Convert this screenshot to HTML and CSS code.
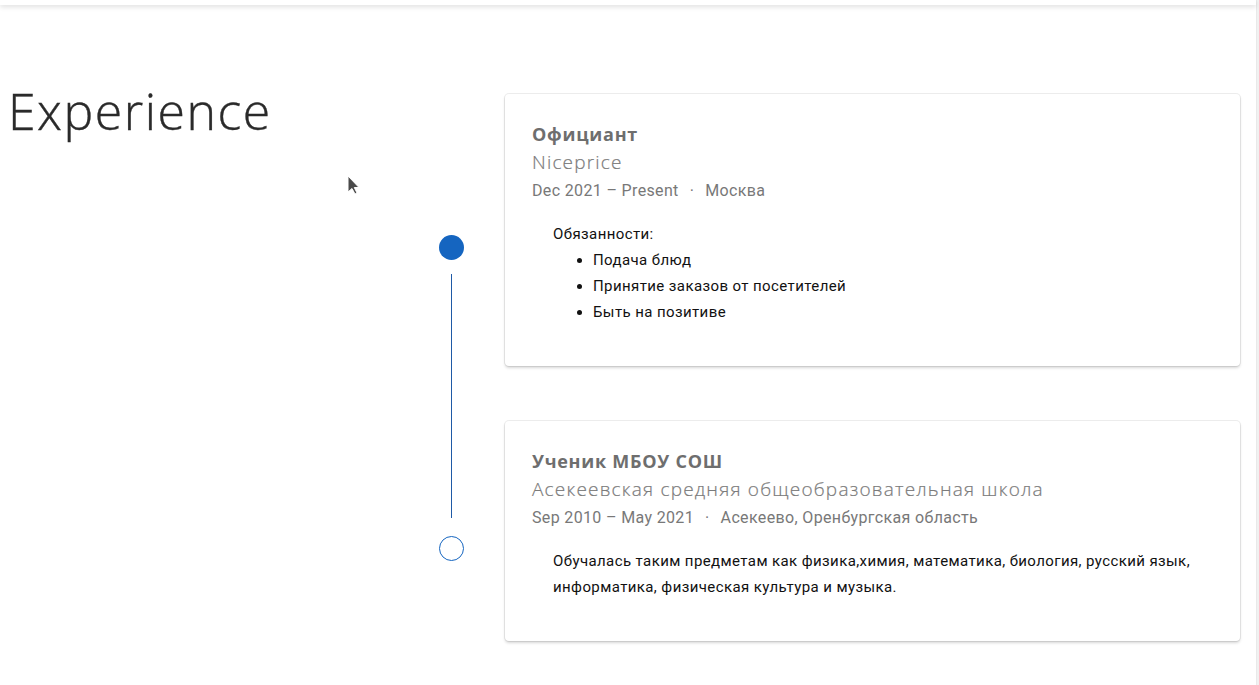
FILE: index.html
```html
<!DOCTYPE html>
<html lang="ru">
<head>
<meta charset="utf-8">
<title>Experience</title>
<link rel="stylesheet" href="styles.css">
</head>
<body>
<div class="page">
  <header class="topbar"></header>
  <section class="experience">
    <h2 class="section-title">Experience</h2>
    <div class="timeline">
      <span class="dot dot-filled"></span>
      <span class="line"></span>
      <span class="dot dot-hollow"></span>
    </div>
    <div class="cards">
      <article class="card">
        <h3 class="job-title">Официант</h3>
        <div class="company">Niceprice</div>
        <div class="meta"><span>Dec 2021 – Present</span><span class="sep">·</span><span>Москва</span></div>
        <div class="body">
          <div>Обязанности:</div>
          <ul class="duties">
            <li>Подача блюд</li>
            <li>Принятие заказов от посетителей</li>
            <li>Быть на позитиве</li>
          </ul>
        </div>
      </article>
      <article class="card">
        <h3 class="job-title">Ученик МБОУ СОШ</h3>
        <div class="company">Асекеевская средняя общеобразовательная школа</div>
        <div class="meta"><span>Sep 2010 – May 2021</span><span class="sep">·</span><span>Асекеево, Оренбургская область</span></div>
        <div class="body">
          <p class="text">Обучалась таким предметам как физика,химия, математика, биология, русский язык, информатика, физическая культура и музыка.</p>
        </div>
      </article>
    </div>
    <svg class="cursor" width="14" height="22" viewBox="0 0 14 22" aria-hidden="true">
      <path d="M1 1 L1 17 L5 13.5 L8 19 L10 18 L7.3 12.5 L12 12.5 Z" fill="#4a4a4a" stroke="#ffffff" stroke-width="1"/>
    </svg>
  </section>
</div>
<div class="scroll-strip"></div>
</body>
</html>
```

FILE: styles.css
```css
* { box-sizing: border-box; }

html, body { height: 100%; }

body {
  margin: 0;
  display: flex;
  background: #ffffff;
  font-family: Roboto, "Liberation Sans", sans-serif;
  overflow: hidden;
}

.page {
  flex: 1;
  min-width: 0;
  background: #ffffff;
}

.scroll-strip {
  width: 3px;
  background: #f1f1f1;
  border-left: 1px solid #e9e9e9;
}

.topbar {
  height: 5px;
  background: #ffffff;
  box-shadow: 0 2px 5px rgba(0, 0, 0, 0.13);
  position: relative;
  z-index: 1;
}

.experience {
  position: relative;
  display: grid;
  grid-template-columns: 390px 25px 1fr;
  column-gap: 41px;
  align-items: start;
  padding: 89px 16px 40px 8px;
}

.section-title {
  margin: -9px 0 0;
  font-family: "Open Sans", "Noto Sans", sans-serif;
  font-weight: 300;
  font-size: 50px;
  line-height: 52px;
  letter-spacing: 1.5px;
  color: #2a2a2a;
  -webkit-text-stroke: 0.4px #2a2a2a;
}

.timeline {
  display: flex;
  flex-direction: column;
  align-items: center;
  padding-top: 141px;
}

.dot {
  width: 25px;
  height: 25px;
  border-radius: 50%;
  flex: none;
}

.dot-filled { background: #1565c0; }

.dot-hollow {
  border: 1px solid #1565c0;
  background: #ffffff;
  margin-top: 18px;
}

.line {
  width: 1px;
  height: 244px;
  margin-top: 14px;
  background: #1f5aa6;
}

.cards {
  display: flex;
  flex-direction: column;
  gap: 55px;
}

.card {
  background: #ffffff;
  border-radius: 4px;
  box-shadow: 0 0 0 1px rgba(0, 0, 0, 0.07), 0 2px 3px rgba(0, 0, 0, 0.16);
  padding: 27px 26px 25px 27px;
}

.job-title {
  margin: 0;
  font-family: "Open Sans", "Noto Sans", sans-serif;
  font-weight: 700;
  font-size: 18px;
  line-height: 26px;
  letter-spacing: 0.75px;
  color: #6e6e6e;
}

.company {
  margin-top: 1px;
  font-family: "Open Sans", "Noto Sans", sans-serif;
  font-weight: 300;
  font-size: 19px;
  line-height: 28px;
  letter-spacing: 1.2px;
  color: #7b7b7b;
  -webkit-text-stroke: 0.2px #7b7b7b;
}

.meta {
  margin-top: 1px;
  font-family: Roboto, "Liberation Sans", sans-serif;
  font-size: 16px;
  line-height: 28px;
  letter-spacing: 0.35px;
  color: #787878;
}

.sep { margin: 0 11px; }

.body {
  margin-top: 16px;
  padding-left: 21px;
  font-family: Roboto, "Liberation Sans", sans-serif;
  font-size: 15px;
  line-height: 26px;
  letter-spacing: 0.4px;
  color: #111111;
}

.duties {
  margin: 0 0 16px;
  padding-left: 40px;
}

.text { margin: 0 0 16px; }

.cursor {
  position: absolute;
  left: 347px;
  top: 170px;
}
```
